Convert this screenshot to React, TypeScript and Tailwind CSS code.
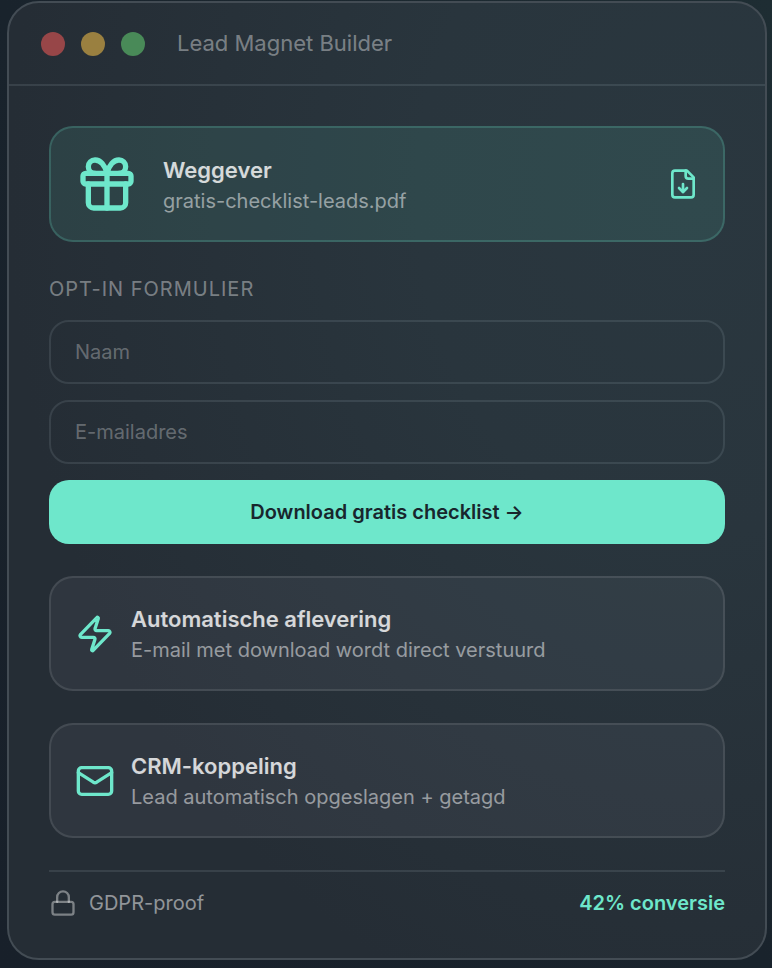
import React, { useState } from 'react';
import { Gift, Lock, Mail, Zap, type LucideIcon } from 'lucide-react';

interface Feature {
  icon: LucideIcon;
  title: string;
  description: string;
}

const features: Feature[] = [
  {
    icon: Zap,
    title: 'Automatische aflevering',
    description: 'E-mail met download wordt direct verstuurd',
  },
  {
    icon: Mail,
    title: 'CRM-koppeling',
    description: 'Lead automatisch opgeslagen + getagd',
  },
];

const inputStyles =
  'block h-16 w-full rounded-[20px] border-2 border-[#e6f5ff]/10 bg-transparent px-6 text-[20px] text-white/80 placeholder:text-white/30 outline-none focus:border-[#6ee7cb]/50';

const FeatureCard: React.FC<Feature> = ({ icon: Icon, title, description }) => (
  <div className="flex items-center gap-4 rounded-3xl border-2 border-white/10 bg-[#e6f5ff]/5 p-6">
    <Icon className="size-10 shrink-0 text-[#6ee7cb]" />
    <div className="min-w-0">
      <h3 className="text-[22px] leading-[34px] font-semibold text-white/80">{title}</h3>
      <p className="text-[20px] leading-[29px] text-white/50">{description}</p>
    </div>
  </div>
);

const DownloadFileIcon: React.FC = () => (
  <svg
    className="size-8 shrink-0 text-[#6ee7cb]"
    viewBox="0 0 24 24"
    fill="none"
    stroke="currentColor"
    strokeWidth={2}
    strokeLinecap="round"
    strokeLinejoin="round"
  >
    <path d="M15 2H6a2 2 0 0 0-2 2v16a2 2 0 0 0 2 2h12a2 2 0 0 0 2-2V7Z" />
    <path d="M14 2v4a2 2 0 0 0 2 2h4" />
    <path d="M12 18v-6" />
    <path d="m9 15 3 3 3-3" />
  </svg>
);

const App: React.FC = () => {
  const [name, setName] = useState<string>('');
  const [email, setEmail] = useState<string>('');

  return (
    <main className="min-h-screen bg-linear-to-bl from-[#1e2d33] via-[#19232c] to-[#18202a] pt-px pr-[5px] pb-2 pl-[7px] font-[Inter,'Liberation_Sans',sans-serif]">
      <div className="overflow-hidden rounded-[32px] border-2 border-[#434c54] bg-[#252d35] bg-[radial-gradient(ellipse_90%_90%_at_90%_20%,#2a373f_0%,#29353d_40%,#252d35_100%)]">
        {/* Window bar */}
        <div className="flex items-center gap-4 border-b-2 border-[#e6f5ff]/10 px-8 py-6">
          <span className="size-6 rounded-full bg-[#974648]" />
          <span className="size-6 rounded-full bg-[#9a8040]" />
          <span className="size-6 rounded-full bg-[#498a58]" />
          <h1 className="ml-4 text-[22px] leading-[33px] text-white/40">Lead Magnet Builder</h1>
        </div>

        <div className="space-y-8 p-10">
          {/* Lead magnet */}
          <div className="flex items-center gap-6 rounded-3xl border-2 border-[#6ee7cb]/20 bg-[#6ee7cb]/10 p-6">
            <Gift className="size-16 shrink-0 text-[#6ee7cb]" />
            <div className="min-w-0 flex-1">
              <h2 className="text-[22px] leading-[34px] font-semibold text-white/80">Weggever</h2>
              <p className="text-[20px] leading-[29px] text-white/50">gratis-checklist-leads.pdf</p>
            </div>
            <DownloadFileIcon />
          </div>

          {/* Opt-in form */}
          <form className="space-y-4" onSubmit={(e) => e.preventDefault()}>
            <h2 className="text-[20px] leading-[30px] tracking-wider text-white/40 uppercase">Opt-in formulier</h2>
            <input
              type="text"
              aria-label="Naam"
              placeholder="Naam"
              value={name}
              onChange={(e) => setName(e.target.value)}
              className={inputStyles}
            />
            <input
              type="email"
              aria-label="E-mailadres"
              placeholder="E-mailadres"
              value={email}
              onChange={(e) => setEmail(e.target.value)}
              className={inputStyles}
            />
            <button
              type="submit"
              className="block h-16 w-full cursor-pointer rounded-[20px] bg-[#6ee7cb] text-[20px] font-semibold text-[#18262d]"
            >
              Download gratis checklist →
            </button>
          </form>

          {features.map((feature) => (
            <FeatureCard key={feature.title} {...feature} />
          ))}

          {/* Footer */}
          <div className="flex items-center justify-between border-t-2 border-[#e6f5ff]/10 pt-4 text-[20px] leading-[30px]">
            <div className="flex items-center gap-3 text-white/50">
              <Lock className="size-7 text-white/40" />
              <span>GDPR-proof</span>
            </div>
            <span className="font-semibold text-[#6ee7cb]">42% conversie</span>
          </div>
        </div>
      </div>
    </main>
  );
};

export default App;
